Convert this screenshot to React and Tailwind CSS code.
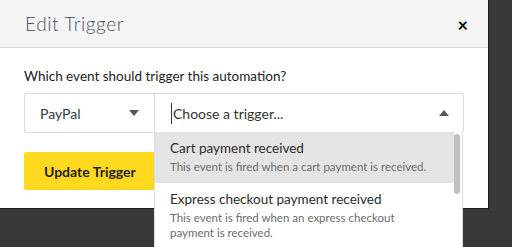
import { useState } from "react";

const triggers = [
  {
    title: "Cart payment received",
    desc: "This event is fired when a cart payment is received.",
  },
  {
    title: "Express checkout payment received",
    desc: "This event is fired when an express checkout payment is received.",
  },
];

function Caret({ up }) {
  return (
    <svg width="10" height="6" viewBox="0 0 10 6" className="shrink-0">
      {up ? (
        <path d="M0 6 L5 0 L10 6 Z" fill="#555" />
      ) : (
        <path d="M0 0 L10 0 L5 6 Z" fill="#555" />
      )}
    </svg>
  );
}

export default function App() {
  const [active] = useState(0);

  return (
    <div
      className="relative w-[512px] h-[247px] overflow-hidden bg-[#393939]"
      style={{ fontFamily: "Lato, 'Noto Sans', sans-serif" }}
    >
      {/* Modal */}
      <div className="w-[489px] h-[209px] bg-white border-r border-b border-[#1c1c1c]">
        <div className="h-[48px] bg-[#f4f4f4] border-b border-[#d9d9d9] flex items-center justify-between pl-[25px] pr-[20px] pt-[2px]">
          <h1 className="text-[19px] tracking-[0.6px] text-[#3e5560] font-light">Edit Trigger</h1>
          <button className="text-[18px] font-bold text-black leading-none">×</button>
        </div>

        <div className="px-[24px] pt-[19px]">
          <p className="text-[13.5px] text-[#222] leading-[18px]">
            Which event should trigger this automation?
          </p>

          <div className="mt-[8px] flex h-[40px] border border-[#dcdcdc] rounded-[2px] w-[440px]">
            <div className="w-[130px] flex items-center justify-between pl-[15px] pr-[15px] border-r border-[#dcdcdc]">
              <span className="text-[14px] text-[#2e3b44]">PayPal</span>
              <Caret />
            </div>
            <div className="flex-1 flex items-center justify-between pl-[16px] pr-[14px]">
              <span className="text-[14px] text-[#333] border-l border-[#333] pl-px">Choose a trigger...</span>
              <Caret up />
            </div>
          </div>

          <button className="mt-[19px] w-[140px] h-[38px] bg-[#ffd91f] rounded-[2px] text-left pl-[20px] text-[14px] font-bold text-[#1f1f1f]">
            Update Trigger
          </button>
        </div>
      </div>

      {/* Dropdown list */}
      <div className="absolute left-[154px] top-[132px] w-[309px] h-[140px] bg-white flex border-x border-[#dcdcdc]">
        <div className="flex-1">
          {triggers.map((t, i) => (
            <div
              key={i}
              className={`pl-[15px] pr-[20px] pt-[6px] pb-[9px] ${i === active ? "bg-[#e4e4e4]" : ""}`}
            >
              <div className="text-[13.5px] text-[#2b2b2b] leading-[20px]">{t.title}</div>
              <div className="text-[11.5px] text-[#6b6b6b] leading-[15px] mt-[1px]">{t.desc}</div>
            </div>
          ))}
        </div>
        <div className="w-[8px] pt-[2px]">
          <div className="w-[6px] h-[60px] rounded-full bg-[#c1c1c1]" />
        </div>
      </div>
    </div>
  );
}
